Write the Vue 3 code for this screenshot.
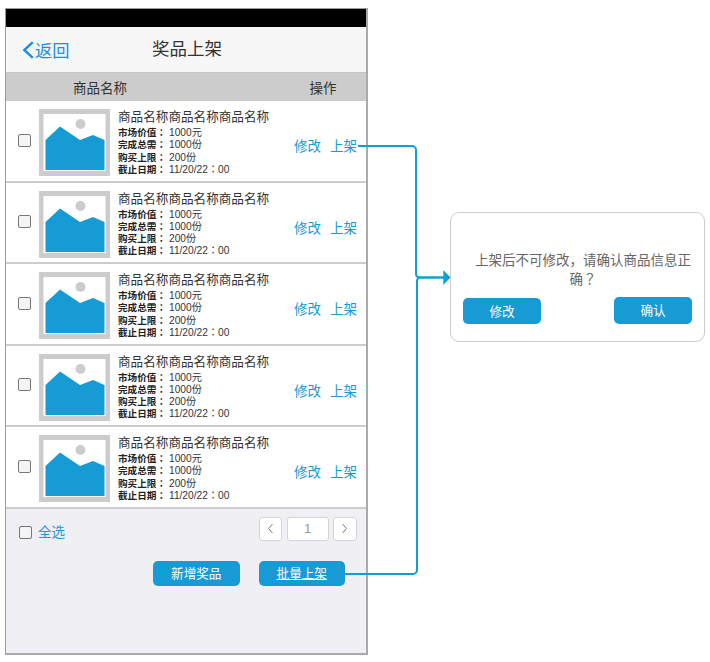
<script setup>
const products = Array.from({ length: 5 }, (_, i) => ({ id: i }))
const details = [
  ['市场价值', '1000元'],
  ['完成总需', '1000份'],
  ['购买上限', '200份'],
  ['截止日期', '11/20/22', '00'],
]
</script>

<template>
  <div class="page">
    <section class="phone">
      <div class="status"></div>
      <header class="nav">
        <a class="back">
          <svg width="12" height="18" viewBox="0 0 12 18"><path d="M10.800 1.200 2.300 9l8.500 7.800" fill="none" stroke="#1a8fe3" stroke-width="2.400"/></svg>
          <span>返回</span>
        </a>
        <h1>奖品上架</h1>
      </header>
      <div class="thead">
        <span>商品名称</span>
        <span class="op">操作</span>
      </div>
      <ul class="list">
        <li v-for="p in products" :key="p.id" class="row">
          <span class="check"></span>
          <svg class="thumb" width="71" height="67" viewBox="0 0 71 67">
            <rect width="71" height="67" fill="#ccc"/>
            <rect x="4.500" y="5" width="62" height="57" fill="#fff"/>
            <circle cx="41.500" cy="15" r="5" fill="#ccc"/>
            <path d="M6.500 31 21 17.500 41 31 54 26 65.500 31V61H6.500Z" fill="#169bd5"/>
          </svg>
          <div class="info">
            <div class="name">商品名称商品名称商品名称</div>
            <div v-for="d in details" :key="d[0]" class="line"><b>{{ d[0] }}<span class="pn">：</span></b><span class="val">{{ d[1] }}<template v-if="d[2]"><span class="pn">：</span>{{ d[2] }}</template></span></div>
          </div>
          <div class="actions"><a>修改</a><a>上架</a></div>
        </li>
      </ul>
      <div class="foot">
        <div class="foot-top">
          <label class="all"><span class="check"></span><a>全选</a></label>
          <div class="pager">
            <span class="pg">
              <svg width="7" height="11" viewBox="0 0 7 11"><path d="M5.500 1 1.500 5.500l4 4.500" fill="none" stroke="#777"/></svg>
            </span>
            <span class="pg cur">1</span>
            <span class="pg">
              <svg width="7" height="11" viewBox="0 0 7 11"><path d="M1.500 1l4 4.500-4 4.500" fill="none" stroke="#777"/></svg>
            </span>
          </div>
        </div>
        <div class="foot-btns">
          <button class="btn">新增奖品</button>
          <button class="btn u">批量上架</button>
        </div>
      </div>
    </section>

    <section class="dialog">
      <p>上架后不可修改<span class="pn">，</span>请确认商品信息正<br>确<span class="pn">？</span></p>
      <div class="d-btns">
        <button class="btn d low">修改</button>
        <button class="btn d">确认</button>
      </div>
    </section>

    <svg class="wires" width="710" height="662" viewBox="0 0 710 662">
      <path d="M358 146H412a4 4 0 0 1 4 4V274a3.500 3.500 0 0 0 3.500 3.500H444" fill="none" stroke="#0f9fd2" stroke-width="2"/>
      <path d="M345 574H413a4 4 0 0 0 4-4V281a3.500 3.500 0 0 1 3.500-3.500H444" fill="none" stroke="#0f9fd2" stroke-width="2"/>
      <path d="M443.300 270 450.500 277.500 443.300 285Z" fill="#0f9fd2"/>
    </svg>
  </div>
</template>

<style scoped>
.page {
  position: relative;
  width: 710px;
  height: 662px;
  padding: 8px 5px 0;
  box-sizing: border-box;
  display: flex;
  align-items: flex-start;
  gap: 82px;
  overflow: hidden;
  background: #fff;
  font-family: "Liberation Sans", "Noto Sans CJK SC", sans-serif;
  color: #333;
}
.pn { font-family: "Liberation Sans", "Noto Sans CJK JP", sans-serif; }
.phone {
  width: 363px;
  height: 647px;
  flex: none;
  box-sizing: border-box;
  border: 1px solid #9a9a9a;
  border-right-width: 2px;
  border-bottom-width: 2px;
  border-right-color: #aaa;
  border-bottom-color: #aaa;
  background: #efeff4;
  display: flex;
  flex-direction: column;
}
.status { height: 18px; background: #000; flex: none; }
.nav {
  height: 45px;
  flex: none;
  box-sizing: border-box;
  background: #f7f7f7;
  display: flex;
  align-items: center;
  position: relative;
  padding-left: 16px;
}
.back {
  display: flex;
  align-items: center;
  gap: 1px;
  font-size: 17.300px;
  color: #1a8fe3;
}
.nav h1 {
  margin: 0;
  font-size: 17.500px;
  font-weight: 400;
  color: #333;
  position: absolute;
  left: 146px;
  top: 10px;
  line-height: 25px;
}
.thead {
  height: 29px;
  flex: none;
  box-sizing: border-box;
  border-top: 1px solid #c4c4c4;
  background: #ccc;
  display: flex;
  align-items: center;
  justify-content: space-between;
  padding: 0 29.500px 0 67px;
  font-size: 13.500px;
  color: #333;
}
.list { list-style: none; margin: 0; padding: 0; flex: none; }
.row {
  height: 81.500px;
  box-sizing: border-box;
  border-bottom: 2px solid #ccc;
  background: #fff;
  display: flex;
  align-items: flex-start;
  padding: 8px 10px 0 11.500px;
}
.row .check { margin-top: 24.500px; }
.check {
  width: 11px;
  height: 11px;
  flex: none;
  border: 1px solid #777;
  border-radius: 2px;
  background: #f4f4f4;
}
.thumb { margin-left: 8.500px; flex: none; display: block; }
.info { margin-left: 8px; width: 160px; flex: none; }
.name { font-size: 12.600px; line-height: 17px; margin-bottom: 1px; color: #333; white-space: nowrap; }
.line { height: 12.300px; font-size: 9.600px; line-height: 12.300px; color: #333; white-space: nowrap; }
.line b { color: #222; }
.val { font-size: 10.200px; margin-left: 3px; }
.actions {
  margin-top: 29px;
  margin-left: 16px;
  display: flex;
  gap: 9px;
  font-size: 13.500px;
  line-height: 18px;
  white-space: nowrap;
  color: #169bd5;
}
.foot { flex: 1; padding: 8.700px 9.300px 0 13px; }
.foot-top { display: flex; justify-content: space-between; align-items: flex-start; }
.all {
  display: flex;
  align-items: center;
  gap: 6px;
  margin-top: 6px;
  font-size: 13.500px;
  line-height: 18px;
  color: #169bd5;
}
.all a { margin-top: 1px; }
.pager { display: flex; gap: 4.500px; }
.pg {
  width: 21.500px;
  height: 21.500px;
  border: 1px solid #d5d5d5;
  border-radius: 3px;
  background: #fff;
  display: flex;
  align-items: center;
  justify-content: center;
  font-size: 13px;
  color: #999;
}
.pg.cur { width: 40px; }
.foot-btns {
  display: flex;
  justify-content: flex-end;
  gap: 19px;
  margin-top: 18.800px;
  padding-right: 11.700px;
}
.btn {
  width: 86.500px;
  height: 25px;
  padding: 0 0 1px;
  border: 0;
  border-radius: 5px;
  background: #169bd5;
  color: #fff;
  font: 12.600px "Liberation Sans", "Noto Sans CJK SC", sans-serif;
}
.btn.u { text-decoration: underline; }
.dialog {
  width: 255px;
  height: 130px;
  margin-top: 204px;
  flex: none;
  box-sizing: border-box;
  border: 1px solid #ccc;
  border-radius: 9px;
  background: #fff;
  padding: 38px 12px 0;
  text-align: center;
}
.dialog p {
  margin: 0;
  font-size: 13.500px;
  line-height: 19px;
  color: #666;
  padding-left: 11px;
}
.d-btns { display: flex; justify-content: space-between; align-items: flex-start; margin-top: 7.500px; }
.btn.d { width: 78px; height: 27px; }
.btn.low { margin-top: 1px; height: 26.500px; }
.wires { position: absolute; left: 0; top: 0; pointer-events: none; }
</style>
